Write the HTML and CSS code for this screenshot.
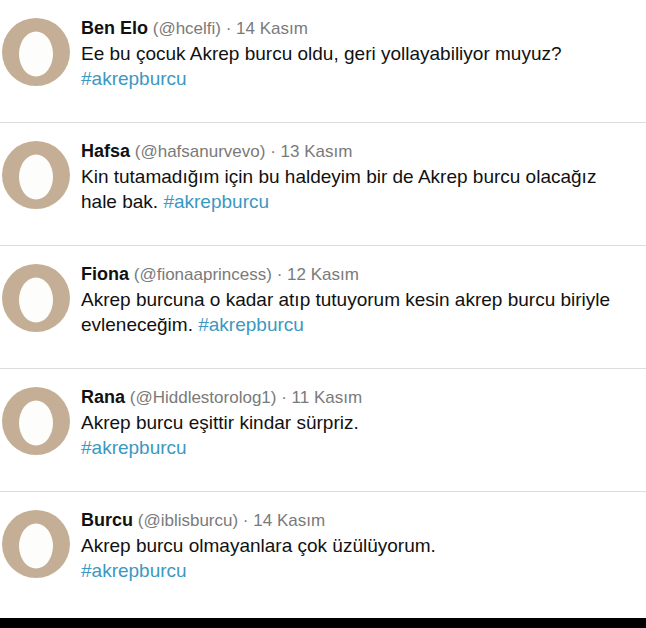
FILE: index.html
```html
<!DOCTYPE html>
<html lang="tr">
<head>
  <meta charset="UTF-8" />
  <title>#akrepburcu</title>
  <link rel="stylesheet" href="styles.css">
</head>
<body>
  <div class="timeline">
    <div class="tweet">
      <svg class="avatar" viewBox="0 0 68 68"><circle cx="34" cy="34" r="34" fill="#c4ae95"/><ellipse cx="34" cy="36" rx="17" ry="22.5" fill="#fdfdfc"/></svg>
      <div class="body">
        <div class="meta"><b class="name">Ben Elo</b> <span class="handle">(@hcelfi) · 14 Kasım</span></div>
        <p>Ee bu çocuk Akrep burcu oldu, geri yollayabiliyor muyuz?<br><a href="#">#akrepburcu</a></p>
      </div>
    </div>

    <div class="tweet">
      <svg class="avatar" viewBox="0 0 68 68"><circle cx="34" cy="34" r="34" fill="#c4ae95"/><ellipse cx="34" cy="36" rx="17" ry="22.5" fill="#fdfdfc"/></svg>
      <div class="body">
        <div class="meta"><b class="name">Hafsa</b> <span class="handle">(@hafsanurvevo) · 13 Kasım</span></div>
        <p>Kin tutamadığım için bu haldeyim bir de Akrep burcu olacağız hale bak. <a href="#">#akrepburcu</a></p>
      </div>
    </div>

    <div class="tweet">
      <svg class="avatar" viewBox="0 0 68 68"><circle cx="34" cy="34" r="34" fill="#c4ae95"/><ellipse cx="34" cy="36" rx="17" ry="22.5" fill="#fdfdfc"/></svg>
      <div class="body">
        <div class="meta"><b class="name">Fiona</b> <span class="handle">(@fionaaprincess) · 12 Kasım</span></div>
        <p>Akrep burcuna o kadar atıp tutuyorum kesin akrep burcu biriyle evleneceğim. <a href="#">#akrepburcu</a></p>
      </div>
    </div>

    <div class="tweet">
      <svg class="avatar" viewBox="0 0 68 68"><circle cx="34" cy="34" r="34" fill="#c4ae95"/><ellipse cx="34" cy="36" rx="17" ry="22.5" fill="#fdfdfc"/></svg>
      <div class="body">
        <div class="meta"><b class="name">Rana</b> <span class="handle">(@Hiddlestorolog1) · 11 Kasım</span></div>
        <p>Akrep burcu eşittir kindar sürpriz.<br><a href="#">#akrepburcu</a></p>
      </div>
    </div>

    <div class="tweet">
      <svg class="avatar" viewBox="0 0 68 68"><circle cx="34" cy="34" r="34" fill="#c4ae95"/><ellipse cx="34" cy="36" rx="17" ry="22.5" fill="#fdfdfc"/></svg>
      <div class="body">
        <div class="meta"><b class="name">Burcu</b> <span class="handle">(@iblisburcu) · 14 Kasım</span></div>
        <p>Akrep burcu olmayanlara çok üzülüyorum.<br><a href="#">#akrepburcu</a></p>
      </div>
    </div>
  </div>
  <div class="bottom-bar"></div>
</body>
</html>
```

FILE: styles.css
```css
body {
  margin: 0;
  background: #fff;
  font-family: "Liberation Sans", Arial, sans-serif;
  color: #111;
  width: 646px;
  height: 628px;
  overflow: hidden;
  display: flex;
  flex-direction: column;
}
.timeline {
  flex: 1;
}
.tweet {
  display: flex;
  gap: 11px;
  padding: 16px 0 0 2px;
  height: 106px;
  border-bottom: 1px solid #dcdcdc;
}
.tweet:last-child {
  border-bottom: none;
}
.avatar {
  width: 68px;
  height: 68px;
  margin-top: 2px;
  flex-shrink: 0;
}
.body {
  flex: 1;
  font-size: 19px;
  line-height: 25px;
}
.meta {
  color: #7a7a7a;
  font-size: 17px;
}
.name {
  color: #111;
  font-size: 18px;
}
p {
  margin: 0;
  padding-right: 18px;
}
a {
  color: #3b98c2;
  text-decoration: none;
}
.bottom-bar {
  height: 10px;
  background: #000;
}
```
